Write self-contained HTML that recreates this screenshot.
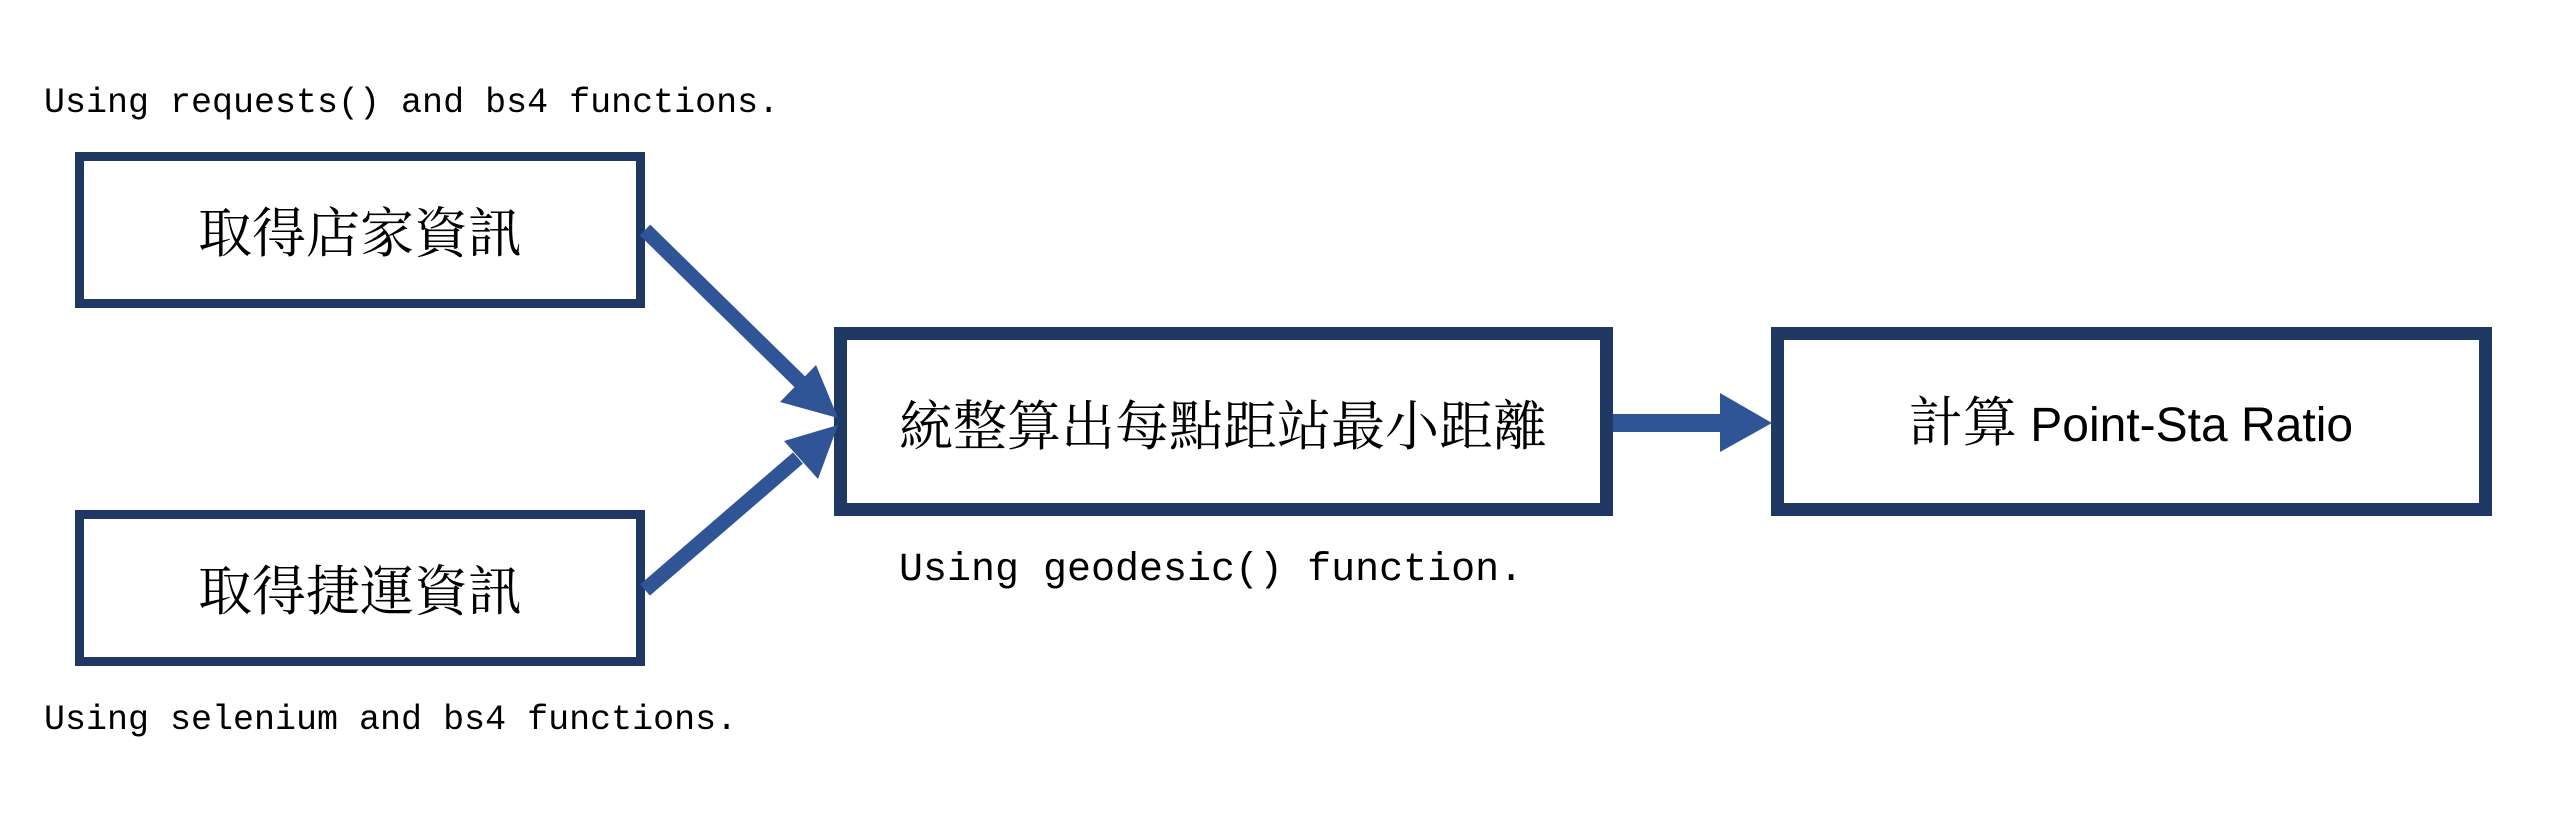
<!DOCTYPE html>
<html><head><meta charset="utf-8"><style>
html,body{margin:0;padding:0;background:#fff;}
svg{display:block}
.m{font-family:"Liberation Mono","DejaVu Sans Mono",monospace;fill:#000}
.c{font-family:"Liberation Serif","Noto Serif CJK SC",serif;fill:#000}
</style></head><body>
<svg width="2555" height="832" viewBox="0 0 2555 832" xmlns="http://www.w3.org/2000/svg">
<text class="m" x="44" y="112" font-size="35">Using requests() and bs4 functions.</text>
<text class="m" x="44" y="729" font-size="35">Using selenium and bs4 functions.</text>
<text class="m" x="899" y="580" font-size="40">Using geodesic() function.</text>

<rect x="79.5" y="156.5" width="561" height="147" fill="#fff" stroke="#203864" stroke-width="9"/>
<rect x="79.5" y="514.5" width="561" height="147" fill="#fff" stroke="#203864" stroke-width="9"/>
<rect x="840.5" y="333.5" width="766" height="176" fill="#fff" stroke="#203864" stroke-width="13"/>
<rect x="1777.5" y="333.5" width="708" height="176" fill="#fff" stroke="#203864" stroke-width="13"/>

<text class="c" x="360" y="252" font-size="54" text-anchor="middle">取得店家資訊</text>
<text class="c" x="360" y="610" font-size="54" text-anchor="middle">取得捷運資訊</text>
<text class="c" x="1223" y="445" font-size="54" text-anchor="middle">統整算出每點距站最小距離</text>
<text x="2131" y="441" font-size="48" text-anchor="middle" font-family="Liberation Sans,'Noto Sans CJK TC',sans-serif"><tspan font-family="'Liberation Serif','Noto Serif CJK SC',serif" font-size="54">計算</tspan> Point-Sta Ratio</text>

<line x1="645" y1="230" x2="800" y2="382" stroke="#2F5597" stroke-width="15"/>
<polygon points="838,418 780,402 816,365" fill="#2F5597"/>
<line x1="645" y1="590" x2="798" y2="458" stroke="#2F5597" stroke-width="15"/>
<polygon points="838,425 818,479 784,441" fill="#2F5597"/>
<rect x="1613" y="414" width="108" height="18" fill="#2F5597"/>
<polygon points="1720,393 1772,423 1720,452" fill="#2F5597"/>
</svg>
</body></html>
